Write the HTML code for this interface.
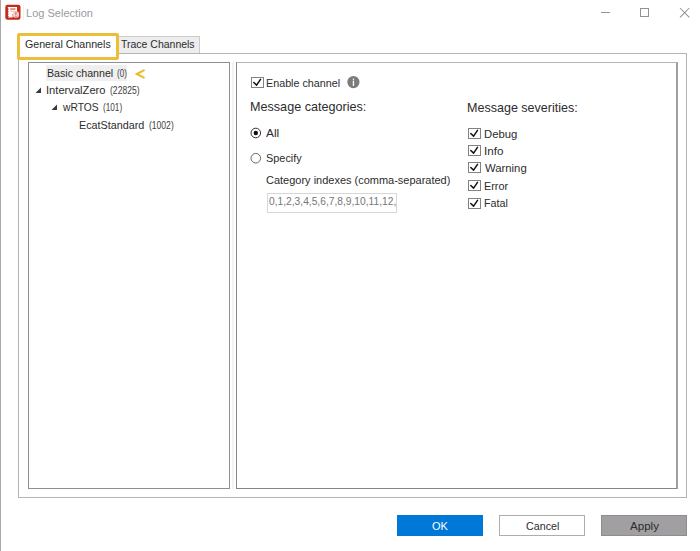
<!DOCTYPE html>
<html><head><meta charset="utf-8">
<style>
html,body{margin:0;padding:0;width:700px;height:551px;overflow:hidden;background:#fff;}
body{position:relative;font-family:"Liberation Sans",sans-serif;}
.a{position:absolute;box-sizing:border-box;}
.t{position:absolute;white-space:nowrap;line-height:1;transform-origin:0 0;}
svg{position:absolute;overflow:visible;}
</style></head><body>
<!-- left window edge -->
<div class="a" style="left:0;top:0;width:1px;height:551px;background:#a9a9a9"></div>
<!-- app icon -->
<svg style="left:0;top:0" width="25" height="25" viewBox="0 0 25 25">
 <rect x="5.3" y="4.8" width="15.2" height="15" rx="2.2" fill="#c42a1b"/>
 <path d="M7.8 7 H17 V11.5 A3.6 3.6 0 0 0 12.6 16 V17.5 H7.8 L8.8 16.5 L7.8 15.3 L8.8 14.1 L7.8 12.9 L8.8 11.7 L7.8 10.5 L8.8 9.3 L7.8 8.1 Z" fill="#fff"/>
 <rect x="10.3" y="8" width="5.2" height="2.2" fill="#e39a90"/>
 <rect x="10.3" y="10.8" width="4" height="0.8" fill="#e9b3ab"/>
 <circle cx="15.9" cy="14.4" r="3.2" fill="#fff"/>
 <circle cx="15.9" cy="14.4" r="2.3" fill="none" stroke="#d86a5e" stroke-width="0.6"/>
 <rect x="15.4" y="12.6" width="1" height="2.4" fill="#c42a1b"/>
 <rect x="15.4" y="15.5" width="1" height="0.9" fill="#c42a1b"/>
</svg>
<div class="a" style="left:23px;top:5px;width:1px;height:15px;background:#f2f2f2"></div>
<!-- window controls -->
<div class="a" style="left:601px;top:12px;width:9px;height:1px;background:#929292"></div>
<div class="a" style="left:640px;top:8px;width:9px;height:9px;border:1px solid #929292"></div>
<svg style="left:680px;top:7.6px" width="10" height="10" viewBox="0 0 10 10">
 <path d="M0 0 L9.3 9.3 M9.3 0 L0 9.3" stroke="#929292" stroke-width="1.05"/>
</svg>
<!-- tab content border -->
<div class="a" style="left:18px;top:53px;width:669px;height:445px;border:1px solid #b4b4b4"></div>
<div class="a" style="left:231.5px;top:62px;width:2.5px;height:427px;background:#f3f3f3"></div>
<!-- trace channels tab -->
<div class="a" style="left:118px;top:36px;width:82px;height:17px;background:#ededed;border:1px solid #cbcbcb;border-bottom:none"></div>
<!-- general channels selected tab (white) -->
<div class="a" style="left:19px;top:34px;width:98px;height:24px;background:#fff"></div>
<!-- yellow highlight -->
<div class="a" style="left:17px;top:33px;width:102px;height:27px;border:3px solid #eabf3c;border-radius:2px"></div>
<!-- tree panel -->
<div class="a" style="left:28px;top:62px;width:202px;height:427px;border:1px solid #8b8f98"></div>
<div class="a" style="left:46px;top:65px;width:81px;height:16px;background:#efefef"></div>
<svg style="left:35px;top:87px" width="7" height="7" viewBox="0 0 7 7"><path d="M6 0.5 V6 H0.5 Z" fill="#3a3a3a"/></svg>
<svg style="left:51px;top:104px" width="7" height="7" viewBox="0 0 7 7"><path d="M6 0.5 V6 H0.5 Z" fill="#3a3a3a"/></svg>
<svg style="left:134.6px;top:69px" width="10" height="10" viewBox="0 0 10 10"><path d="M8.8 1.4 L1.8 5 L8.8 8.6" stroke="#e9bb2e" stroke-width="2.1" fill="none" stroke-linecap="round"/></svg>
<!-- right panel -->
<div class="a" style="left:236px;top:62px;width:442px;height:427px;border:1px solid #858585;border-top-color:#b5b5b5;border-right:2px solid #a0a0a0"></div>
<!-- enable checkbox -->
<div class="a" style="left:251px;top:77px;width:13px;height:11px;border:1px solid #828282;background:#fff"></div>
<svg style="left:251px;top:77px" width="12" height="11" viewBox="0 0 12 11"><path d="M2.8 5.5 L5.6 8.1 L9.5 2.4" stroke="#151515" stroke-width="1.55" fill="none" stroke-linecap="round" stroke-linejoin="round"/></svg>
<!-- info icon -->
<svg style="left:347px;top:76px" width="13" height="13" viewBox="0 0 13 13">
 <circle cx="6.4" cy="6.1" r="6.1" fill="#7b7b7b"/>
 <rect x="5.8" y="4.6" width="1.3" height="5.3" fill="#fff"/>
 <rect x="5.8" y="2.6" width="1.3" height="1.3" fill="#fff"/>
</svg>
<!-- radios -->
<svg style="left:250px;top:127px" width="12" height="12" viewBox="0 0 12 12">
 <circle cx="5.8" cy="6" r="4.8" fill="#fff" stroke="#333" stroke-width="1"/>
 <circle cx="5.8" cy="6" r="2.2" fill="#111"/>
</svg>
<svg style="left:250px;top:152px" width="12" height="12" viewBox="0 0 12 12">
 <circle cx="5.8" cy="6.2" r="4.8" fill="#fff" stroke="#6a6a6a" stroke-width="1"/>
</svg>
<!-- textbox -->
<div class="a" style="left:267px;top:193px;width:130px;height:20px;border:1px solid #d6d6d6;background:#fff;overflow:hidden"></div>
<!-- severity checkboxes -->
<div class="a" style="left:468px;top:128px;width:13px;height:11px;border:1px solid #828282"></div>
<svg style="left:468px;top:128px" width="12" height="11" viewBox="0 0 12 11"><path d="M2.8 5.5 L5.6 8.1 L9.5 2.4" stroke="#151515" stroke-width="1.55" fill="none" stroke-linecap="round" stroke-linejoin="round"/></svg>
<div class="a" style="left:468px;top:145px;width:13px;height:11px;border:1px solid #828282"></div>
<svg style="left:468px;top:145px" width="12" height="11" viewBox="0 0 12 11"><path d="M2.8 5.5 L5.6 8.1 L9.5 2.4" stroke="#151515" stroke-width="1.55" fill="none" stroke-linecap="round" stroke-linejoin="round"/></svg>
<div class="a" style="left:468px;top:162px;width:13px;height:11px;border:1px solid #828282"></div>
<svg style="left:468px;top:162px" width="12" height="11" viewBox="0 0 12 11"><path d="M2.8 5.5 L5.6 8.1 L9.5 2.4" stroke="#151515" stroke-width="1.55" fill="none" stroke-linecap="round" stroke-linejoin="round"/></svg>
<div class="a" style="left:468px;top:180px;width:13px;height:11px;border:1px solid #828282"></div>
<svg style="left:468px;top:180px" width="12" height="11" viewBox="0 0 12 11"><path d="M2.8 5.5 L5.6 8.1 L9.5 2.4" stroke="#151515" stroke-width="1.55" fill="none" stroke-linecap="round" stroke-linejoin="round"/></svg>
<div class="a" style="left:468px;top:198px;width:13px;height:11px;border:1px solid #828282"></div>
<svg style="left:468px;top:198px" width="12" height="11" viewBox="0 0 12 11"><path d="M2.8 5.5 L5.6 8.1 L9.5 2.4" stroke="#151515" stroke-width="1.55" fill="none" stroke-linecap="round" stroke-linejoin="round"/></svg>
<!-- buttons -->
<div class="a" style="left:397px;top:515px;width:86px;height:21px;background:#0078d7"></div>
<div class="a" style="left:499px;top:515px;width:86px;height:21px;border:1px solid #adadad;background:#fff"></div>
<div class="a" style="left:601px;top:515px;width:86px;height:21px;border:1px solid #8d8d8d;background:#a19fa1"></div>
<div class="t" id="title" style="left:25.62px;top:7.61px;font-size:11.20px;color:#9b9ba3;transform:scaleX(0.9870)">Log Selection</div>
<div class="t" id="tab1" style="left:24.64px;top:38.90px;font-size:11.50px;color:#2c2c2c;transform:scaleX(0.9245)">General Channels</div>
<div class="t" id="tab2" style="left:120.86px;top:39.21px;font-size:11.50px;color:#2c2c2c;transform:scaleX(0.9116)">Trace Channels</div>
<div class="t" id="basic" style="left:46.50px;top:67.61px;font-size:11.20px;color:#2c2c2c;transform:scaleX(0.9507)">Basic channel</div>
<div class="t" id="basic_n" style="left:117.48px;top:68.61px;font-size:10.00px;color:#404040;transform:scaleX(0.8069)">(0)</div>
<div class="t" id="iz" style="left:45.68px;top:84.91px;font-size:11.20px;color:#2c2c2c;transform:scaleX(0.9975)">IntervalZero</div>
<div class="t" id="iz_n" style="left:110.11px;top:85.90px;font-size:10.00px;color:#404040;transform:scaleX(0.8598)">(22825)</div>
<div class="t" id="wr" style="left:63.18px;top:102.21px;font-size:11.20px;color:#2c2c2c;transform:scaleX(0.9184)">wRTOS</div>
<div class="t" id="wr_n" style="left:103.34px;top:103.21px;font-size:10.00px;color:#404040;transform:scaleX(0.8209)">(101)</div>
<div class="t" id="ec" style="left:79.30px;top:119.50px;font-size:11.20px;color:#2c2c2c;transform:scaleX(0.9627)">EcatStandard</div>
<div class="t" id="ec_n" style="left:149.38px;top:120.50px;font-size:10.00px;color:#404040;transform:scaleX(0.8553)">(1002)</div>
<div class="t" id="enable" style="left:266.40px;top:76.61px;font-size:11.60px;color:#2c2c2c;transform:scaleX(0.9274)">Enable channel</div>
<div class="t" id="mcat" style="left:250.10px;top:100.40px;font-size:13.50px;color:#2c2c2c;transform:scaleX(0.9338)">Message categories:</div>
<div class="t" id="msev" style="left:466.50px;top:100.50px;font-size:13.50px;color:#2c2c2c;transform:scaleX(0.9282)">Message severities:</div>
<div class="t" id="all" style="left:266.02px;top:126.91px;font-size:11.60px;color:#2c2c2c;transform:scaleX(1.0270)">All</div>
<div class="t" id="spec" style="left:265.78px;top:152.01px;font-size:11.60px;color:#2c2c2c;transform:scaleX(0.9407)">Specify</div>
<div class="t" id="catidx" style="left:266.00px;top:174.31px;font-size:11.60px;color:#2c2c2c;transform:scaleX(0.9475)">Category indexes (comma-separated)</div>
<div class="t" id="tbtext" style="left:268.85px;top:195.40px;font-size:11.60px;color:#767676;transform:scaleX(0.8824)">0,1,2,3,4,5,6,7,8,9,10,11,12,</div>
<div class="t" id="debug" style="left:483.82px;top:127.81px;font-size:11.60px;color:#2c2c2c;transform:scaleX(0.9741)">Debug</div>
<div class="t" id="info" style="left:484.38px;top:145.11px;font-size:11.60px;color:#2c2c2c;transform:scaleX(1.0015)">Info</div>
<div class="t" id="warn" style="left:484.82px;top:162.40px;font-size:11.60px;color:#2c2c2c;transform:scaleX(0.9753)">Warning</div>
<div class="t" id="err" style="left:484.30px;top:179.71px;font-size:11.60px;color:#2c2c2c;transform:scaleX(0.9359)">Error</div>
<div class="t" id="fatal" style="left:484.30px;top:197.01px;font-size:11.60px;color:#2c2c2c;transform:scaleX(0.9296)">Fatal</div>
<div class="t" id="ok" style="left:431.88px;top:520.11px;font-size:11.60px;color:#ffffff;transform:scaleX(0.9478)">OK</div>
<div class="t" id="cancel" style="left:525.58px;top:520.31px;font-size:11.60px;color:#2c2c2c;transform:scaleX(0.9241)">Cancel</div>
<div class="t" id="apply" style="left:629.80px;top:520.31px;font-size:11.60px;color:#2c2c2c;transform:scaleX(0.9969)">Apply</div>
</body></html>
